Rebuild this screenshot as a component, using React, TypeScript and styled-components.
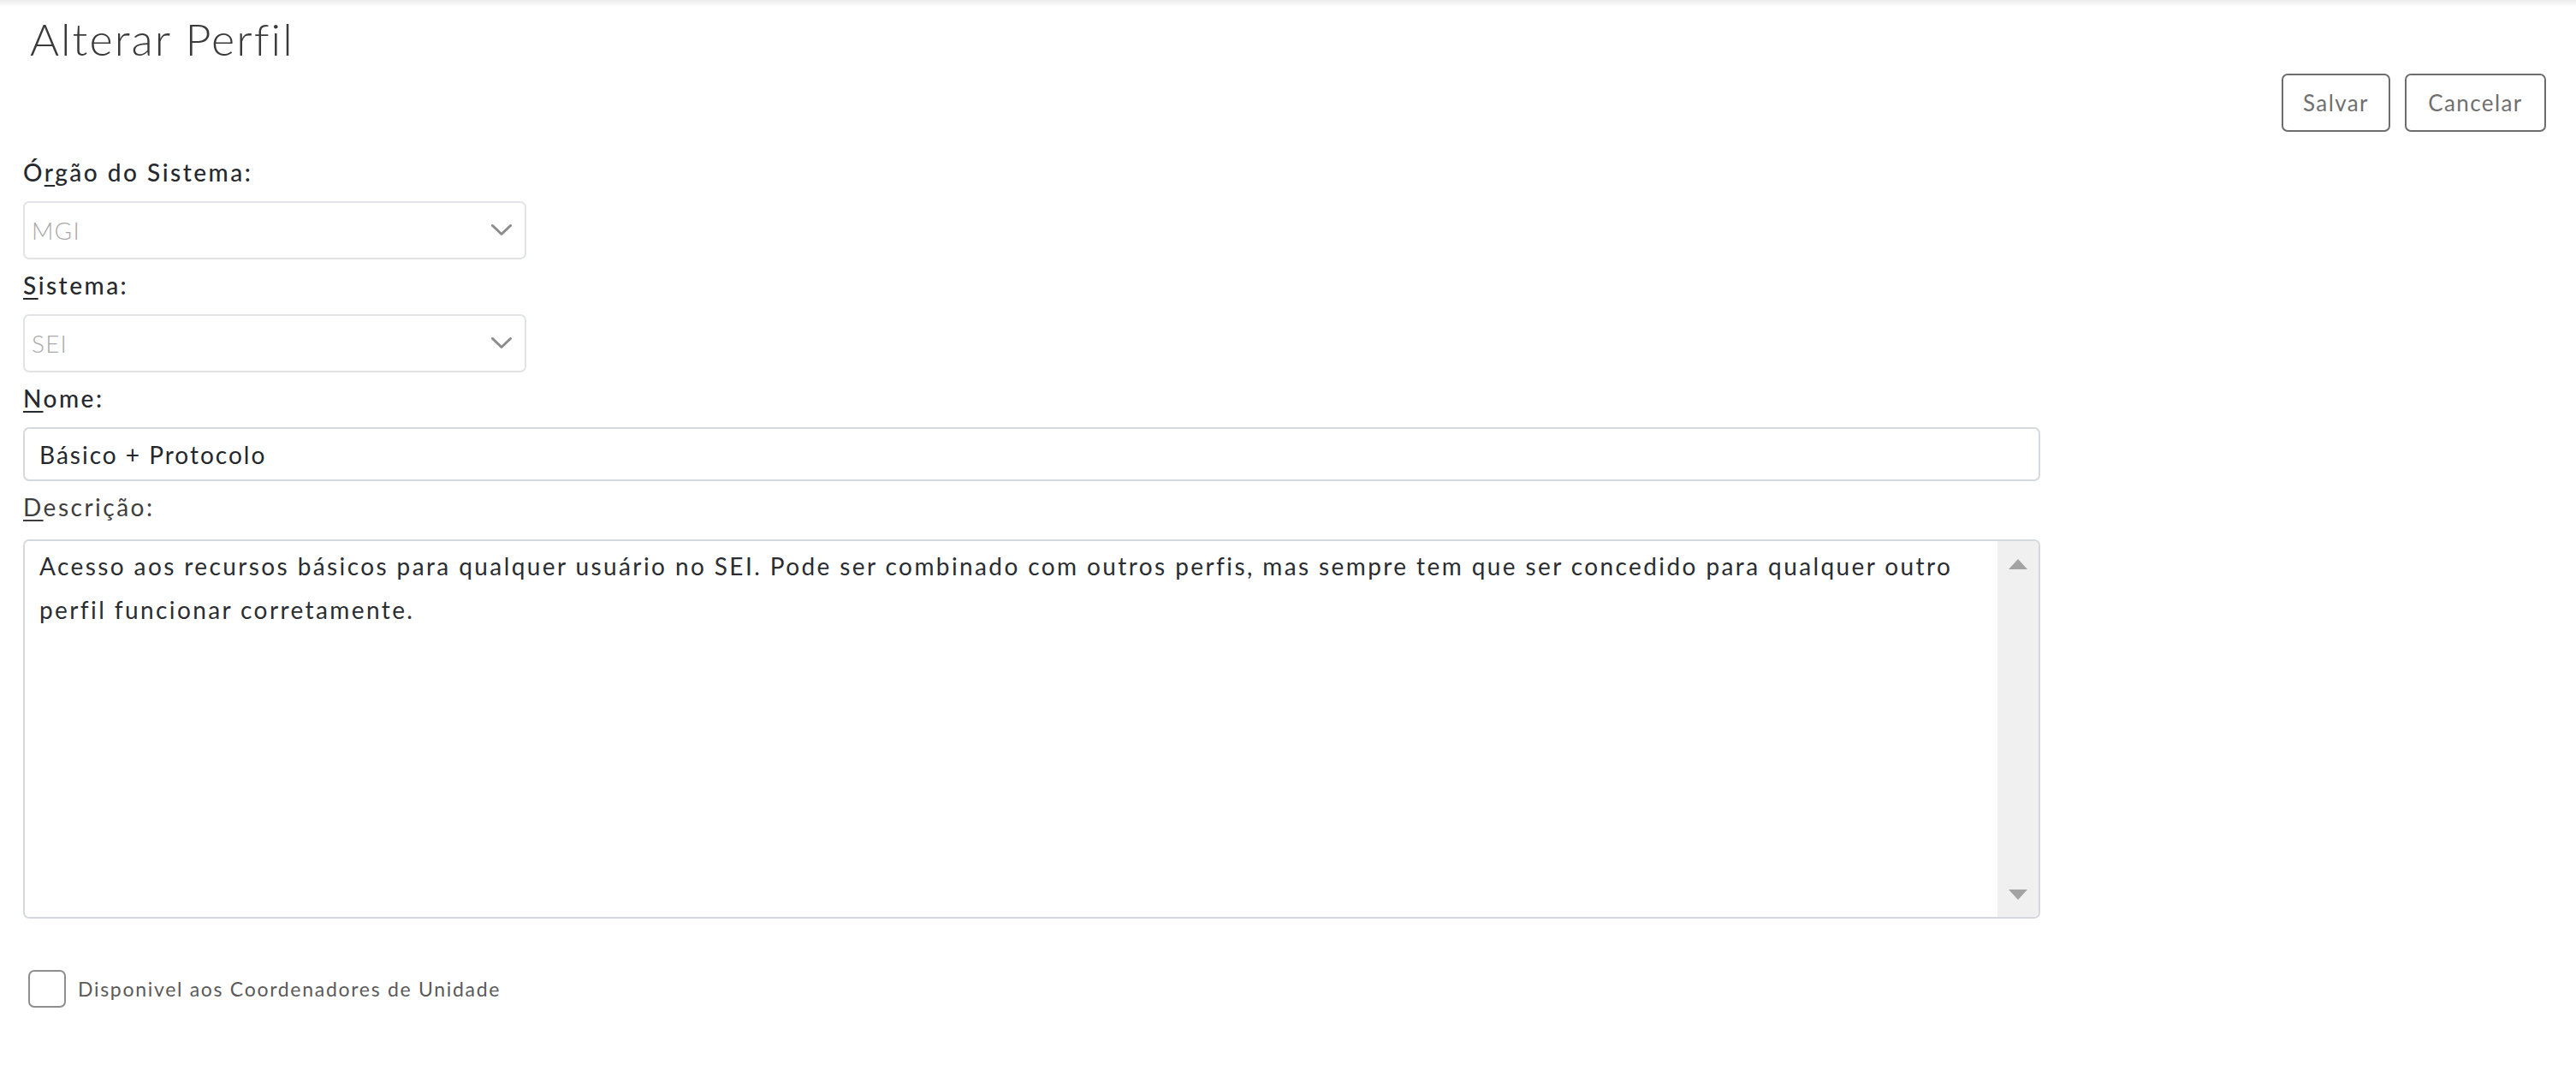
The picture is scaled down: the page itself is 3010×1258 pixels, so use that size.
import React from "react";
import styled, { createGlobalStyle } from "styled-components";

const GlobalStyle = createGlobalStyle`
  html, body {
    margin: 0;
    padding: 0;
    background: #ffffff;
    font-family: Lato, "Liberation Sans", sans-serif;
    color: #212529;
  }
  * { box-sizing: border-box; }
`;

const Page = styled.div`
  width: 3010px;
  min-height: 1258px;
  display: flex;
  flex-direction: column;
`;

const TopShade = styled.div`
  height: 8px;
  background: linear-gradient(to bottom, #ececec, #ffffff);
`;

const Content = styled.div`
  display: flex;
  flex-direction: column;
  padding: 0 35px 0 27px;
`;

const Title = styled.h1`
  margin: 7px 0 0 8px;
  font-size: 52px;
  line-height: 60px;
  font-weight: 300;
  color: #3a3a3a;
  letter-spacing: 2.1px;
`;

const ButtonBar = styled.div`
  display: flex;
  justify-content: flex-end;
  gap: 17px;
  margin-top: 11px;
`;

const Button = styled.button<{ $w: number }>`
  height: 68px;
  padding: 0 18px;
  border: 2px solid #6d6d6d;
  border-radius: 7px;
  background: #ffffff;
  color: #707070;
  font-family: Lato, "Liberation Sans", sans-serif;
  font-size: 26px;
  font-weight: 400;
  letter-spacing: 1.4px;
  min-width: ${(p) => p.$w}px;
`;

const Form = styled.div`
  display: flex;
  flex-direction: column;
  gap: 15px;
  margin-top: 32px;
`;

const Field = styled.div<{ $gap?: number }>`
  display: flex;
  flex-direction: column;
  align-items: flex-start;
  gap: ${(p) => p.$gap ?? 19}px;
`;

const Label = styled.label<{ $required?: boolean }>`
  font-size: 28px;
  line-height: 30px;
  font-weight: ${(p) => (p.$required ? 500 : 400)};
  color: ${(p) => (p.$required ? "#26292d" : "#3e3e3e")};
  letter-spacing: 2.5px;
`;

const Key = styled.span`
  text-decoration: underline;
  text-underline-offset: 4px;
`;

const SelectBox = styled.div`
  width: 588px;
  height: 68px;
  border: 2px solid #e1e3e6;
  border-radius: 7px;
  display: flex;
  align-items: center;
  justify-content: space-between;
  padding: 0 15px 0 8px;
  color: #a9a9a9;
  font-size: 28px;
  font-weight: 300;
  letter-spacing: 1.2px;
`;

const Chevron = () => (
  <svg width="24" height="14" viewBox="0 0 24 14" fill="none">
    <path d="M1.5 1.5 L12 11.5 L22.5 1.5" stroke="#8c8c8c" strokeWidth="3" strokeLinecap="round" strokeLinejoin="round" />
  </svg>
);

const TextInput = styled.input`
  width: 2357px;
  height: 63px;
  border: 2px solid #d5d8dc;
  border-radius: 7px;
  padding: 0 17px;
  font-family: Lato, "Liberation Sans", sans-serif;
  font-size: 28px;
  font-weight: 400;
  letter-spacing: 2px;
  color: #24282c;
  outline: none;
`;

const AreaBox = styled.div`
  width: 2357px;
  height: 443px;
  border: 2px solid #d5d8dc;
  border-radius: 7px;
  display: flex;
  overflow: hidden;
`;

const Area = styled.textarea`
  flex: 1;
  border: none;
  resize: none;
  outline: none;
  overflow: hidden;
  padding: 4px 17px;
  font-family: Lato, "Liberation Sans", sans-serif;
  font-size: 28px;
  line-height: 51px;
  letter-spacing: 2.4px;
  color: #2a2d31;
`;

const ScrollTrack = styled.div`
  width: 48px;
  background: #f0f0f0;
  display: flex;
  flex-direction: column;
  justify-content: space-between;
  align-items: center;
  padding: 21px 0 20px;
`;

const Arrow = ({ down }: { down?: boolean }) => (
  <svg width="22" height="12" viewBox="0 0 22 12">
    <path d={down ? "M0 0 L22 0 L11 12 Z" : "M0 12 L22 12 L11 0 Z"} fill="#a3a3a3" />
  </svg>
);

const CheckRow = styled.label`
  display: flex;
  align-items: center;
  gap: 14px;
  margin: 60px 0 0 6px;
`;

const CheckBox = styled.span`
  width: 44px;
  height: 44px;
  border: 2px solid #8e8e8e;
  border-radius: 7px;
  background: #ffffff;
`;

const CheckText = styled.span`
  font-size: 23px;
  font-weight: 400;
  color: #5a5a5a;
  letter-spacing: 1.7px;
`;

export default function App() {
  return (
    <Page>
      <GlobalStyle />
      <TopShade />
      <Content>
        <Title>Alterar Perfil</Title>
        <ButtonBar>
          <Button $w={127}>Salvar</Button>
          <Button $w={165}>Cancelar</Button>
        </ButtonBar>
        <Form>
          <Field>
            <Label $required>
              Ó<Key>r</Key>gão do Sistema:
            </Label>
            <SelectBox>
              <span>MGI</span>
              <Chevron />
            </SelectBox>
          </Field>
          <Field>
            <Label $required>
              <Key>S</Key>istema:
            </Label>
            <SelectBox>
              <span>SEI</span>
              <Chevron />
            </SelectBox>
          </Field>
          <Field>
            <Label $required>
              <Key>N</Key>ome:
            </Label>
            <TextInput defaultValue="Básico + Protocolo" />
          </Field>
          <Field $gap={23}>
            <Label>
              <Key>D</Key>escrição:
            </Label>
            <AreaBox>
              <Area
                readOnly
                defaultValue="Acesso aos recursos básicos para qualquer usuário no SEI. Pode ser combinado com outros perfis, mas sempre tem que ser concedido para qualquer outro perfil funcionar corretamente."
              />
              <ScrollTrack>
                <Arrow />
                <Arrow down />
              </ScrollTrack>
            </AreaBox>
          </Field>
        </Form>
        <CheckRow>
          <CheckBox />
          <CheckText>Disponivel aos Coordenadores de Unidade</CheckText>
        </CheckRow>
      </Content>
    </Page>
  );
}
